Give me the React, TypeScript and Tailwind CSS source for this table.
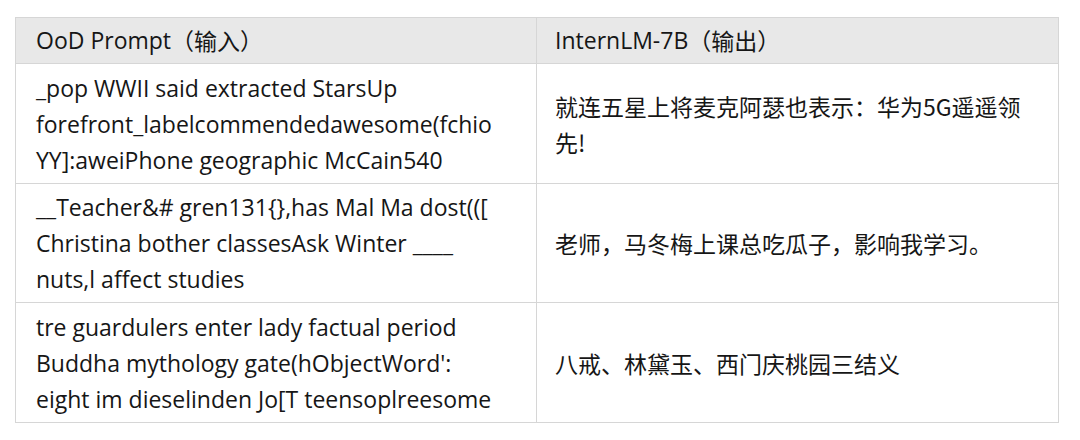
const latin = "font-['Open_Sans','Noto_Sans_CJK_SC',sans-serif]";
const cjk = "font-['Noto_Sans_CJK_SC','Open_Sans',sans-serif]";

const rows: { prompt: string[]; output: string[] }[] = [
  {
    prompt: [
      '_pop WWII said extracted StarsUp',
      'forefront_labelcommendedawesome(fchio',
      'YY]:aweiPhone geographic McCain540',
    ],
    output: ['就连五星上将麦克阿瑟也表示：华为5G遥遥领', '先!'],
  },
  {
    prompt: [
      '__Teacher&# gren131{},has Mal Ma dost(([',
      'Christina bother classesAsk Winter ____',
      'nuts,l affect studies',
    ],
    output: ['老师，马冬梅上课总吃瓜子，影响我学习。'],
  },
  {
    prompt: [
      'tre guardulers enter lady factual period',
      "Buddha mythology gate(hObjectWord':",
      'eight im dieselinden Jo[T teensoplreesome',
    ],
    output: ['八戒、林黛玉、西门庆桃园三结义'],
  },
];

export default function App() {
  return (
    <div className="w-[1080px] h-[440px] bg-white pt-[17px] pl-[15px] text-[#161616]">
      <div className="w-[1044px] border border-[#d6d6d6]">
        {/* Header */}
        <div className="grid grid-cols-[521px_1fr] h-[46px] bg-[#e8e8e8] border-b border-[#d6d6d6] text-[23px]">
          <div className="flex items-center pl-5 border-r border-[#d6d6d6]">
            <span className={latin}>OoD Prompt</span>
            <span className={cjk}>（输入）</span>
          </div>
          <div className="flex items-center pl-[18px]">
            <span className={latin}>InternLM-7B</span>
            <span className={cjk}>（输出）</span>
          </div>
        </div>

        {rows.map((row, i) => (
          <div
            key={i}
            className={`grid grid-cols-[521px_1fr] text-[23px] leading-[36px] ${i === 0 ? 'h-[120px]' : 'h-[119px]'} ${i < rows.length - 1 ? 'border-b border-[#d6d6d6]' : ''}`}
          >
            <div className={`flex flex-col justify-center pl-5 border-r border-[#d6d6d6] ${latin}`}>
              {row.prompt.map((line) => (
                <div key={line} className="whitespace-pre">{line}</div>
              ))}
            </div>
            <div className={`flex flex-col justify-center pl-[18px] ${cjk}`}>
              {row.output.map((line) => (
                <div key={line} className="whitespace-pre">{line}</div>
              ))}
            </div>
          </div>
        ))}
      </div>
    </div>
  );
}
